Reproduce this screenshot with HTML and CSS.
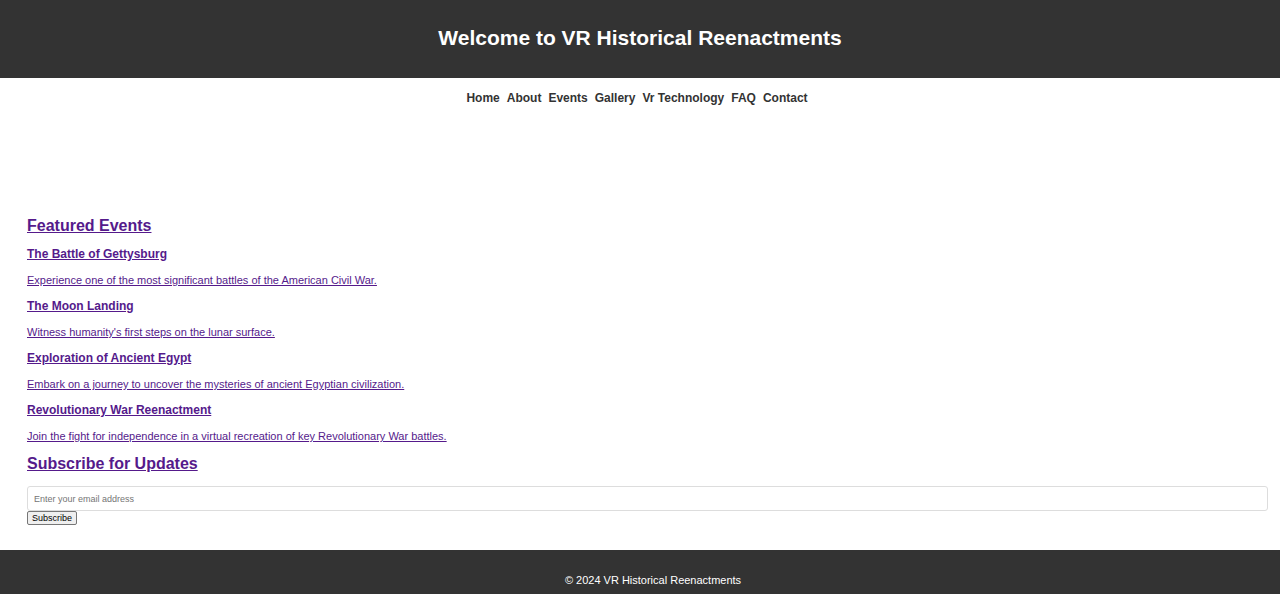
FILE: index.html
```html
<!DOCTYPE html>
<html lang="en">
<head>
<meta charset="utf-8">
<meta name="viewport" content="width=device-width, initial-scale=1">
<title>VR Historical Reenactments</title>
<link rel="stylesheet" href="styles.css">
</head>
<body>
<header class="site-header">
  <h1 class="site-title">Welcome to VR Historical Reenactments</h1>
</header>
<nav class="site-nav">
  <a href="#home">Home</a>
  <a href="#about">About</a>
  <a href="#events">Events</a>
  <a href="#gallery">Gallery</a>
  <a href="#technology">Vr Technology</a>
  <a href="#faq">FAQ</a>
  <a href="#contact">Contact</a>
</nav>
<main class="content">
  <section class="events" id="events">
    <h2 class="section-title"><a href="#events">Featured Events</a></h2>
    <article class="event">
      <h3 class="event-title"><a href="#gettysburg">The Battle of Gettysburg</a></h3>
      <p class="event-text"><a href="#gettysburg">Experience one of the most significant battles of the American Civil War.</a></p>
    </article>
    <article class="event">
      <h3 class="event-title"><a href="#moon">The Moon Landing</a></h3>
      <p class="event-text"><a href="#moon">Witness humanity's first steps on the lunar surface.</a></p>
    </article>
    <article class="event">
      <h3 class="event-title"><a href="#egypt">Exploration of Ancient Egypt</a></h3>
      <p class="event-text"><a href="#egypt">Embark on a journey to uncover the mysteries of ancient Egyptian civilization.</a></p>
    </article>
    <article class="event">
      <h3 class="event-title"><a href="#revolution">Revolutionary War Reenactment</a></h3>
      <p class="event-text"><a href="#revolution">Join the fight for independence in a virtual recreation of key Revolutionary War battles.</a></p>
    </article>
  </section>
  <section class="subscribe">
    <h2 class="section-title"><a href="#subscribe">Subscribe for Updates</a></h2>
    <form class="subscribe-form" id="subscribe">
      <input class="email" type="email" aria-label="Email address" placeholder="Enter your email address">
      <button class="submit" type="submit">Subscribe</button>
    </form>
  </section>
</main>
<footer class="site-footer">
  <p class="copyright">© 2024 VR Historical Reenactments</p>
</footer>
</body>
</html>
```
FILE: styles.css
```css
* {
  box-sizing: border-box;
}

body {
  margin: 0;
  min-height: 100vh;
  display: flex;
  flex-direction: column;
  background: #fff;
  color: #333;
  font-family: "Liberation Sans", Arial, sans-serif;
  font-size: 11px;
  line-height: 14px;
}

h1,
h2,
h3,
p {
  margin: 0;
}

.site-header {
  padding: 24px 12px 26px;
  background: #333;
  color: #fff;
  text-align: center;
}

.site-title {
  font-size: 21px;
  line-height: 28px;
}

.site-nav {
  display: flex;
  justify-content: center;
  gap: 7px;
  padding: 12px 18px 12px 12px;
  font-size: 12px;
  font-weight: bold;
  line-height: 16px;
}

.site-nav a {
  color: #333;
  text-decoration: none;
}

.content {
  display: flex;
  flex-direction: column;
  gap: 12px;
  padding: 99px 12px 25px 27px;
}

.content a {
  color: #551a8b;
}

.events {
  display: flex;
  flex-direction: column;
  gap: 10px;
}

.section-title {
  font-size: 16px;
  line-height: 18px;
}

.event {
  display: flex;
  flex-direction: column;
  gap: 10px;
}

.event-title {
  font-size: 12px;
  line-height: 18px;
}

.subscribe-form {
  display: flex;
  flex-direction: column;
  align-items: flex-start;
  margin-top: 13px;
}

.email {
  width: 100%;
  height: 25px;
  padding: 0 6px;
  border: 1px solid #ddd;
  border-radius: 3px;
  font-family: inherit;
  font-size: 9px;
}

.submit {
  height: 14px;
  padding: 0 4px;
  border: 1px solid #767676;
  border-radius: 2px;
  background: #efefef;
  color: #000;
  font-family: inherit;
  font-size: 9px;
  line-height: 12px;
}

.site-footer {
  flex: 1;
  padding: 23px 0 7px 26px;
  background: #333;
  color: #fff;
  text-align: center;
}
```
